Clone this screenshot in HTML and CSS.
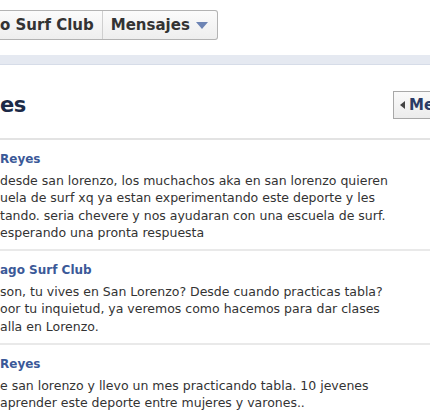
FILE: index.html
```html
<!DOCTYPE html>
<html>
<head>
<meta charset="utf-8">
<link rel="stylesheet" href="styles.css">
</head>
<body>
<div class="page">
  <div class="topbar">
    <div class="crumbs">
      <span class="crumb">o Surf Club</span>
      <span class="crumb dd">Mensajes <svg class="caret" width="12" height="7" viewBox="0 0 12 7"><path d="M0 0H12L6 7Z" fill="#6d84b4"/></svg></span>
    </div>
  </div>
  <div class="band"></div>
  <div class="header">
    <h2 class="title">es</h2>
    <div class="back"><svg class="tri" width="5" height="8" viewBox="0 0 5 8"><path d="M5 0V8L0 4Z" fill="#444"/></svg><span>Me</span></div>
  </div>
  <ul class="msgs">
    <li class="msg">
      <div class="name">Reyes</div>
      <div class="text">desde san lorenzo, los muchachos aka en san lorenzo quieren<br>uela de surf xq ya estan experimentando este deporte y les<br>tando. seria chevere y nos ayudaran con una escuela de surf.<br>esperando una pronta respuesta</div>
    </li>
    <li class="msg">
      <div class="name">ago Surf Club</div>
      <div class="text">son, tu vives en San Lorenzo? Desde cuando practicas tabla?<br>oor tu inquietud, ya veremos como hacemos para dar clases<br>alla en Lorenzo.</div>
    </li>
    <li class="msg">
      <div class="name">Reyes</div>
      <div class="text">e san lorenzo y llevo un mes practicando tabla. 10 jevenes<br>aprender este deporte entre mujeres y varones..</div>
    </li>
  </ul>
</div>
</body>
</html>
```

FILE: styles.css
```css
html, body {
  margin: 0;
  padding: 0;
  background: #fff;
}
.page {
  width: 430px;
  height: 410px;
  overflow: hidden;
  font-family: "DejaVu Sans", Tahoma, sans-serif;
  color: #333;
}
.topbar {
  padding-top: 10px;
  height: 55px;
  box-sizing: border-box;
}
.crumbs {
  display: inline-flex;
  height: 30px;
  box-sizing: border-box;
  border: 1px solid #b3b3b3;
  border-left: none;
  border-radius: 0 3px 3px 0;
  background: linear-gradient(#fbfbfb, #eeeeee);
}
.crumb {
  display: flex;
  align-items: center;
  font-weight: bold;
  font-size: 15px;
  color: #333;
  padding: 0 8px 0 0;
}
.crumb.dd {
  border-left: 1px solid #cfcfcf;
  padding: 0 9px 0 8px;
  gap: 6px;
}
.caret {
  margin-top: 1px;
  flex-shrink: 0;
}
.band {
  height: 9px;
  background: #e5e9f1;
  border-bottom: 1px solid #d6dce8;
}
.header {
  display: flex;
  justify-content: space-between;
  align-items: center;
  height: 75px;
  padding-top: 6px;
  border-bottom: 2px solid #e3e3e3;
  box-sizing: border-box;
}
.title {
  margin: 0;
  font-size: 21px;
  font-weight: bold;
  color: #1c2a47;
  letter-spacing: -0.5px;
}
.back {
  display: flex;
  align-items: center;
  gap: 4px;
  height: 28px;
  width: 50px;
  flex-shrink: 0;
  box-sizing: border-box;
  padding-left: 6px;
  margin-right: -13px;
  border: 1px solid #a8a8a8;
  border-right: none;
  background: linear-gradient(#fafafa, #ececec);
  font-weight: bold;
  font-size: 15px;
  color: #2b3b66;
  overflow: hidden;
  white-space: nowrap;
}
.tri {
  flex-shrink: 0;
}
.msgs {
  list-style: none;
  margin: 0;
  padding: 0;
}
.msg {
  border-bottom: 2px solid #e9e9e9;
  padding: 11px 0 8px 0;
}
.name {
  font-weight: bold;
  font-size: 12px;
  color: #3b5998;
  line-height: 17px;
  margin-bottom: 4px;
}
.text {
  font-size: 12.5px;
  line-height: 17.3px;
  white-space: nowrap;
  color: #333;
}
```
